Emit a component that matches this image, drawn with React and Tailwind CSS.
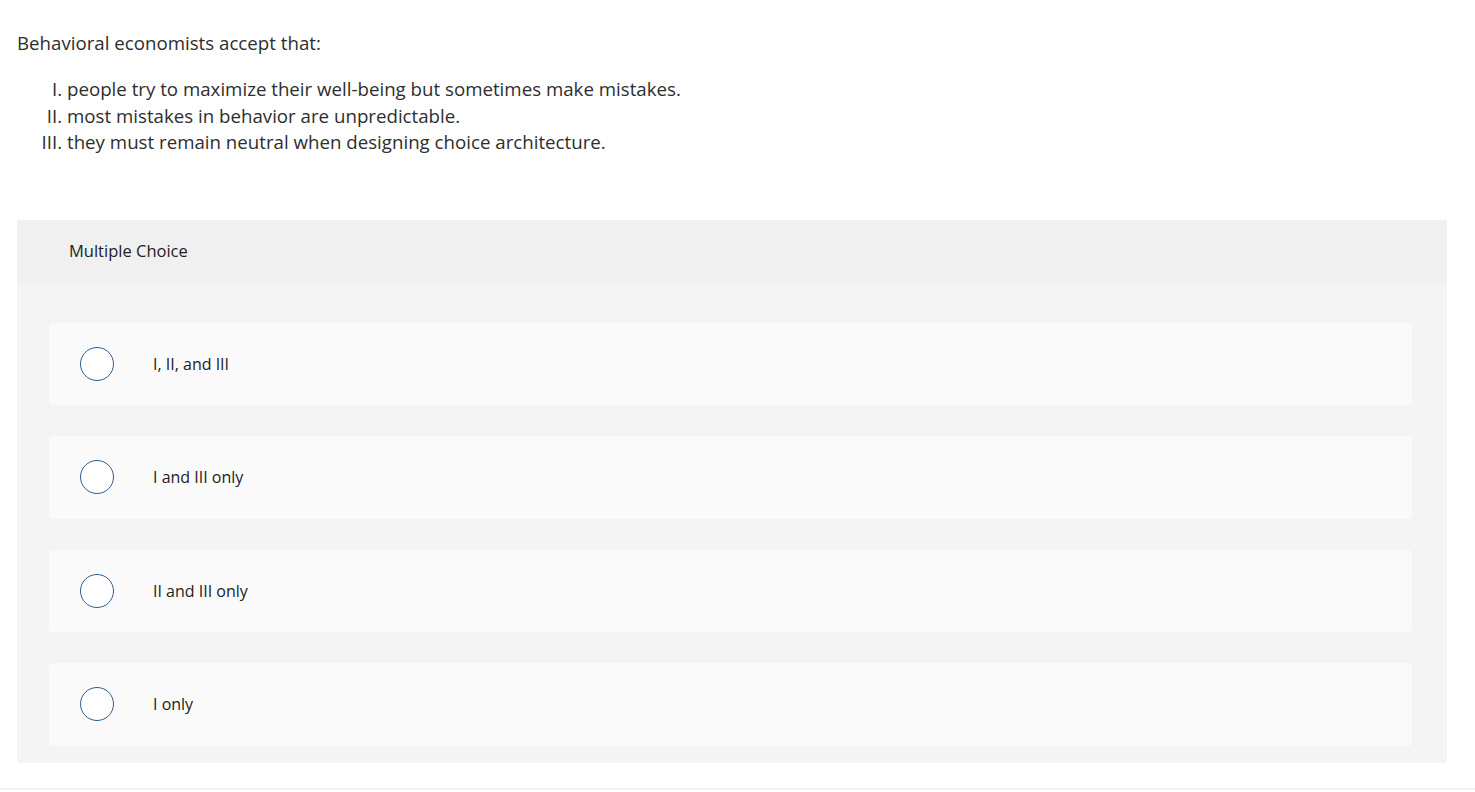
export default function App() {
  const options = ['I, II, and III', 'I and III only', 'II and III only', 'I only'];

  return (
    <div className="min-h-[792px] bg-white text-[#2e2e2e] font-['Open_Sans','Liberation_Sans',sans-serif]">
      <div className="px-[17px] pt-[30px]">
        <p className="text-[18.7px] leading-[26px]">Behavioral economists accept that:</p>
        <ol className="list-[upper-roman] pl-[50px] mt-[20px] text-[18.7px] leading-[26.5px]">
          <li>people try to maximize their well-being but sometimes make mistakes.</li>
          <li>most mistakes in behavior are unpredictable.</li>
          <li>they must remain neutral when designing choice architecture.</li>
        </ol>
      </div>

      <div className="mx-[17px] mt-[64px] w-[1430px] rounded-[3px] bg-[#f4f4f4]">
        <div className="h-[63px] flex items-center pl-[52px] bg-[#f0f0f0] rounded-t-[3px] text-[16.5px] text-[#222]">
          Multiple Choice
        </div>
        <div className="pt-[40px] pb-[17px] pl-[32px] pr-[35px] flex flex-col gap-[31px]">
          {options.map((opt) => (
            <div key={opt} className="h-[82.5px] bg-[#fafafa] rounded-[4px] flex items-center pl-[31px]">
              <span className="w-[34px] h-[34px] rounded-full border-[1.5px] border-[#2d5f94] bg-white shrink-0" />
              <span className="ml-[39px] text-[16px] text-[#222]">{opt}</span>
            </div>
          ))}
        </div>
      </div>

      <div className="mt-[25px] h-[2px] bg-[#f2f2f2]" />
    </div>
  );
}
